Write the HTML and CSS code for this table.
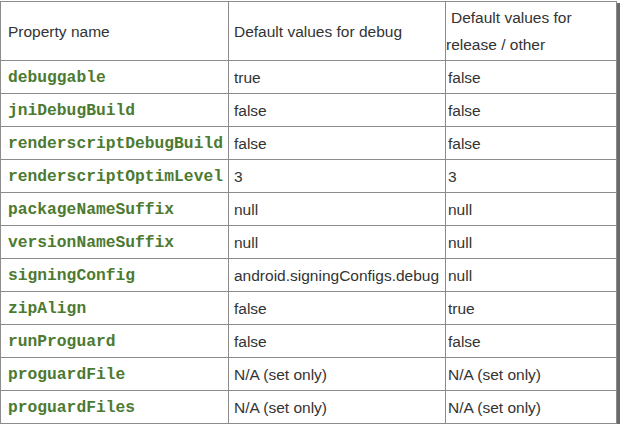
FILE: index.html
```html
<!DOCTYPE html>
<html>
<head>
<meta charset="utf-8">
<link rel="stylesheet" href="styles.css">
</head>
<body>
<div class="frame">
<table class="props">
  <colgroup>
    <col class="c1">
    <col class="c2">
    <col class="c3">
  </colgroup>
  <thead>
    <tr>
      <th>Property name</th>
      <th>Default values for debug</th>
      <th class="wrap"><span class="lead">Default values for</span><br>release / other</th>
    </tr>
  </thead>
  <tbody>
    <tr><td><code>debuggable</code></td><td>true</td><td>false</td></tr>
    <tr><td><code>jniDebugBuild</code></td><td>false</td><td>false</td></tr>
    <tr><td><code>renderscriptDebugBuild</code></td><td>false</td><td>false</td></tr>
    <tr><td><code>renderscriptOptimLevel</code></td><td>3</td><td>3</td></tr>
    <tr><td><code>packageNameSuffix</code></td><td>null</td><td>null</td></tr>
    <tr><td><code>versionNameSuffix</code></td><td>null</td><td>null</td></tr>
    <tr><td><code>signingConfig</code></td><td>android.signingConfigs.debug</td><td>null</td></tr>
    <tr><td><code>zipAlign</code></td><td>false</td><td>true</td></tr>
    <tr><td><code>runProguard</code></td><td>false</td><td>false</td></tr>
    <tr><td><code>proguardFile</code></td><td>N/A (set only)</td><td>N/A (set only)</td></tr>
    <tr><td><code>proguardFiles</code></td><td>N/A (set only)</td><td>N/A (set only)</td></tr>
  </tbody>
</table>
</div>
</body>
</html>
```
FILE: styles.css
```css
html, body {
  margin: 0;
  padding: 0;
  background: #ffffff;
}
.frame {
  padding-top: 1px;
  width: 616px;
}
.props {
  border-collapse: collapse;
  table-layout: fixed;
  width: 616px;
  font-family: "Liberation Sans", Arial, sans-serif;
  font-size: 15.5px;
  color: #333333;
  box-shadow: 3px 3px 0 1px #6a6a6a;
}
.c1 { width: 228px; }
.c2 { width: 217px; }
.c3 { width: 171px; }
.props th,
.props td {
  border: 1px solid #8c8c8c;
  text-align: left;
  font-weight: normal;
  white-space: nowrap;
  overflow: visible;
  vertical-align: middle;
}
.props th {
  height: 58px;
  padding: 0 0 0 7px;
  line-height: 27px;
}
.props th:nth-child(2) { padding-left: 5px; }
.props th.wrap { padding-left: 0; }
.props th.wrap .lead { padding-left: 5px; }
.props td {
  height: 31px;
  padding: 0 0 0 5px;
  line-height: 31px;
}
.props td:first-child { padding-left: 7px; }
.props td:nth-child(3) { padding-left: 2px; }
.props code {
  font-family: "Liberation Mono", "Courier New", monospace;
  font-size: 16.3px;
  font-weight: bold;
  color: #4c7a30;
}
```
